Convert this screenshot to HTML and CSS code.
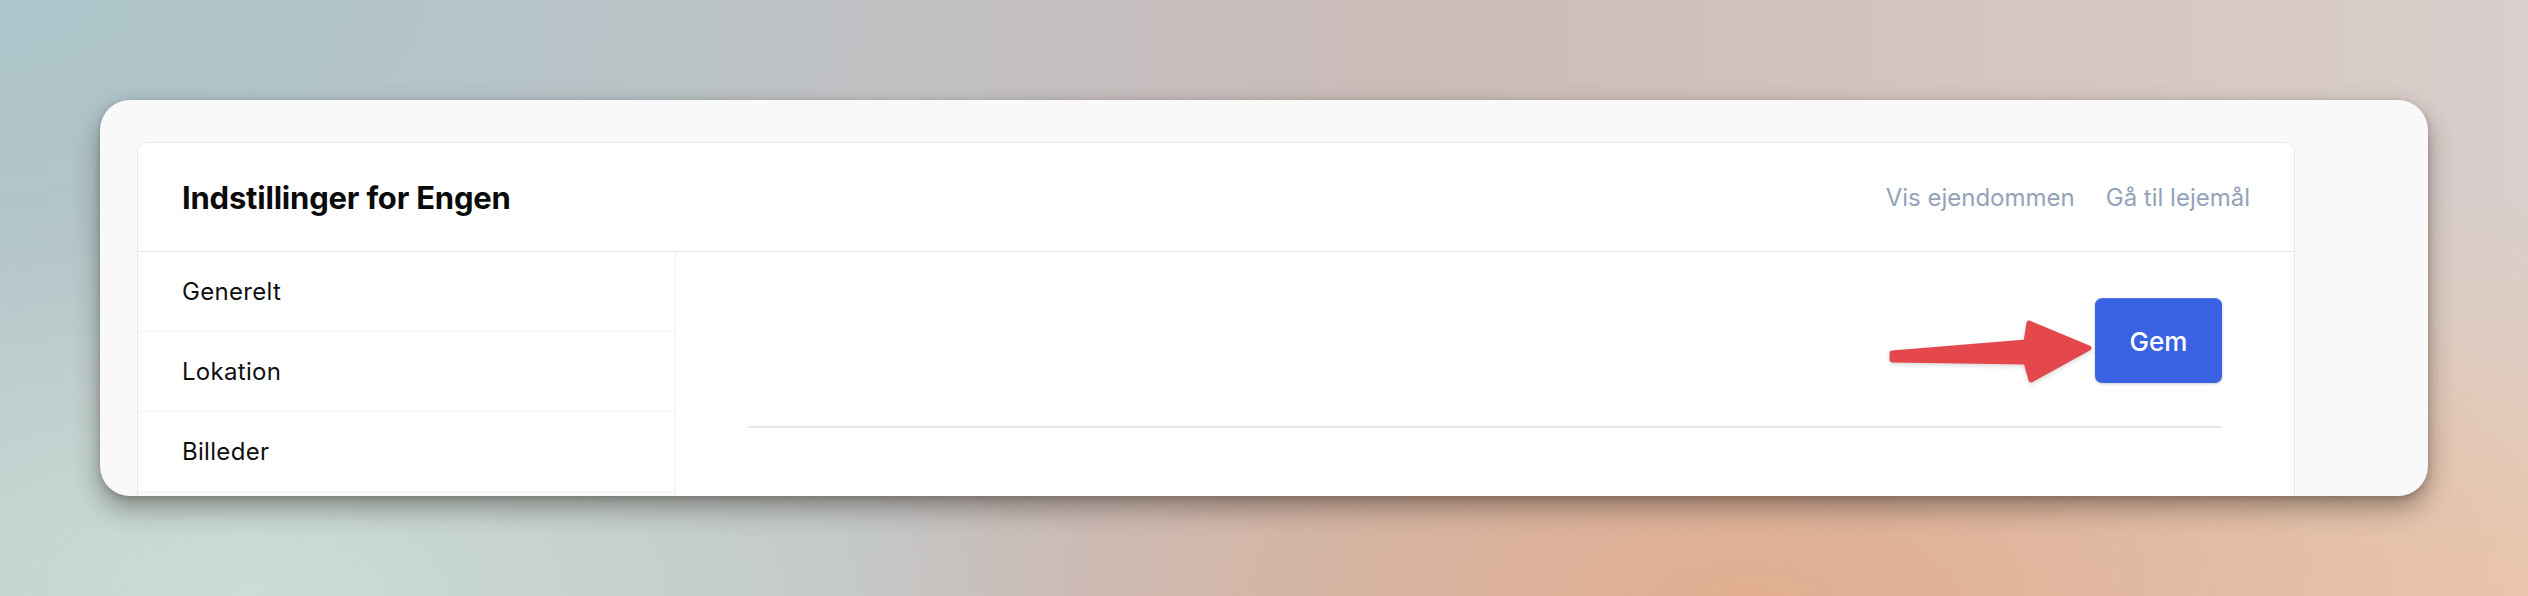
FILE: index.html
```html
<!DOCTYPE html>
<html lang="da">
<head>
<meta charset="utf-8">
<title>Indstillinger for Engen</title>
<link rel="stylesheet" href="styles.css">
</head>
<body>
<div class="stage">
  <div class="window">
    <div class="panel">
      <header class="panel-head">
        <h1 class="title">Indstillinger for Engen</h1>
        <nav class="head-links">
          <a class="head-link">Vis ejendommen</a>
          <a class="head-link">Gå til lejemål</a>
        </nav>
      </header>
      <div class="panel-body">
        <aside class="sidebar">
          <div class="side-item">Generelt</div>
          <div class="side-item">Lokation</div>
          <div class="side-item">Billeder</div>
          <div class="side-item side-item--next"></div>
        </aside>
        <main class="content">
          <div class="actions">
            <span class="btn-wrap">
              <svg class="arrow" width="212" height="70" viewBox="0 0 212 70" aria-hidden="true">
                <path d="M8 35 L142 24 L145 5 L205 30 L147 62 L142 44 L8 42 Z" fill="#e4484c" stroke="#e4484c" stroke-width="5" stroke-linejoin="round"/>
              </svg>
              <button class="btn">Gem</button>
            </span>
          </div>
          <hr class="divider">
        </main>
      </div>
    </div>
  </div>
</div>
</body>
</html>
```

FILE: styles.css
```css
html, body {
  margin: 0;
  padding: 0;
}

body {
  width: 2528px;
  height: 596px;
  overflow: hidden;
  font-family: "Inter", "Liberation Sans", sans-serif;
}

.stage {
  width: 2528px;
  height: 596px;
  box-sizing: border-box;
  padding: 100px 100px 0 100px;
  background:
    radial-gradient(ellipse 900px 420px at 1750px 600px, rgba(228, 170, 135, 0.85), rgba(228, 170, 135, 0) 100%),
    radial-gradient(ellipse 700px 400px at 2528px 596px, rgba(236, 200, 172, 0.9), rgba(236, 200, 172, 0) 100%),
    radial-gradient(ellipse 800px 380px at 250px 596px, rgba(205, 222, 214, 0.95), rgba(205, 222, 214, 0) 100%),
    radial-gradient(ellipse 900px 420px at 0px 0px, rgba(172, 196, 202, 1), rgba(172, 196, 202, 0) 100%),
    linear-gradient(90deg, #b7c6c9 0%, #c2c2c4 35%, #cbbcb9 55%, #d6c5c0 80%, #d9cfcc 100%);
}

.window {
  width: 2328px;
  height: 396px;
  box-sizing: border-box;
  padding: 42px 133px 0 37px;
  background: #f9f9f9;
  border-radius: 30px;
  overflow: hidden;
  box-shadow: 0 12px 26px rgba(40, 30, 25, 0.42), 0 2px 6px rgba(40, 30, 25, 0.2);
}

.panel {
  background: #ffffff;
  border: 1px solid #e6e9ed;
  border-radius: 10px;
  height: 420px;
}

.panel-head {
  height: 109px;
  box-sizing: border-box;
  padding: 0 44px;
  display: flex;
  align-items: center;
  justify-content: space-between;
  border-bottom: 1px solid #e4e7eb;
}

.title {
  margin: 0;
  font-size: 31px;
  font-weight: 700;
  color: #0b0b0c;
  letter-spacing: -0.2px;
}

.head-links {
  display: flex;
  gap: 31px;
}

.head-link {
  font-size: 24px;
  color: #95a2b9;
  text-decoration: none;
}

.panel-body {
  display: grid;
  grid-template-columns: 538px 1fr;
}

.sidebar {
  border-right: 1px solid #eef1f5;
}

.side-item {
  height: 80px;
  box-sizing: border-box;
  padding-left: 44px;
  display: flex;
  align-items: center;
  font-size: 24px;
  letter-spacing: 0.3px;
  color: #111111;
  border-bottom: 1px solid #f0f2f5;
}

.side-item--next {
  background: #f8fafc;
}

.content {
  padding: 46px 72px 0 72px;
}

.actions {
  display: flex;
  justify-content: flex-end;
}

.btn-wrap {
  position: relative;
  display: inline-block;
}

.arrow {
  position: absolute;
  left: -211px;
  top: 20px;
  filter: drop-shadow(0 2px 2px rgba(0, 0, 0, 0.15));
}

.btn {
  display: block;
  width: 127px;
  height: 85px;
  border: none;
  border-top: 1px solid #5077ea;
  border-radius: 7px;
  background: #3a63e3;
  color: #ffffff;
  font-family: "Inter", "Lato", sans-serif;
  font-size: 26px;
  font-weight: 500;
  box-shadow: 0 1px 3px rgba(0, 0, 0, 0.2);
}

.divider {
  margin: 43px 0 0 0;
  border: none;
  border-top: 2px solid #e6e8eb;
  height: 0;
}
```
